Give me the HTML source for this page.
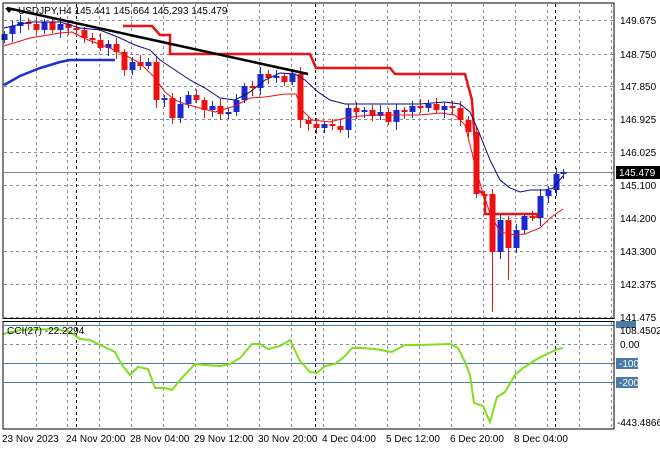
<!DOCTYPE html>
<html><head><style>
body{margin:0;background:#fff;width:660px;height:450px;overflow:hidden;font-family:"Liberation Sans",sans-serif;}
svg{position:absolute;left:0;top:0}
text{font-family:"Liberation Sans",sans-serif;font-size:10px;fill:#000}
</style></head><body>
<svg id="s" width="660" height="450" xmlns="http://www.w3.org/2000/svg">
<g id="grid" stroke="#8a8f96" stroke-dasharray="3,3" stroke-width="1"></g>
<g stroke="#000" stroke-dasharray="3,3" stroke-width="1">
<line x1="76.5" y1="4" x2="76.5" y2="429"/><line x1="315.5" y1="4" x2="315.5" y2="429"/><line x1="555.5" y1="4" x2="555.5" y2="429"/>
</g>
<line x1="4" y1="172.5" x2="614" y2="172.5" stroke="#7d8a96"/>
<g stroke="#4a7ba7" stroke-width="1">
<line x1="4" y1="325.5" x2="614" y2="325.5"/><line x1="4" y1="363.5" x2="614" y2="363.5"/><line x1="4" y1="382.5" x2="614" y2="382.5"/>
</g>
<line x1="4" y1="344.5" x2="614" y2="344.5" stroke="#8a8f96" stroke-dasharray="3,3"/>
<g id="c"></g>
<polyline fill="none" stroke="#1a2fd6" stroke-width="2.5" points="4,85 20,76 40,68 60,62 70,60 115,60"/>
<polyline fill="none" stroke="#ee1111" stroke-width="2.5" points="123,26 152,26 160,35 170,35 170,54 310,54 316,68 390,68 395,74 465,74 472,100 478,190 485,195 485,214 537,214 537,218"/>
<polyline fill="none" stroke="#ee1111" stroke-width="1" points="4,46 30,38 60,33 72,32 88,40 110,48 125,55 140,63 155,78 165,92 175,100 185,104 200,108 215,112 235,106 250,98 265,97 285,94 296,94 302,110 312,120 330,122 345,118 360,116 380,115 400,115 420,115 440,113 455,115 465,125 475,165 482,190 490,213 500,232 515,235 525,234 540,228 550,218 563,209"/>
<polyline fill="none" stroke="#0a0a80" stroke-width="1" points="4,28 30,22 60,22 80,28 100,30 120,38 135,45 150,50 160,60 175,70 190,80 205,88 220,98 235,100 250,92 265,80 280,73 295,74 305,80 318,92 330,100 345,104 370,104 395,104 420,104 445,102 460,104 470,112 478,130 490,160 500,180 510,188 520,192 530,190 545,190 553,188 563,176"/>
<line x1="7" y1="8" x2="308" y2="74" stroke="#000" stroke-width="2.5"/>
<polyline fill="none" stroke="#7ee01a" stroke-width="2" points="3,334 20,330 55,329 70,332 80,339 90,340 100,345 115,352 122,365 130,375 138,367 148,369 155,388 165,388 172,390 180,380 195,364 205,365 220,366 230,364 240,358 252,344 260,344 268,349 280,346 290,340 300,361 310,372 317,373 325,366 335,364 345,356 352,348 362,348 375,349 392,352 405,345 420,345 450,344 458,348 465,362 470,375 474,403 483,406 490,422 497,397 505,392 515,375 523,368 537,359 547,354 558,349 563,348"/>
<rect x="3" y="3" width="611" height="315.5" fill="none" stroke="#000" stroke-width="1"/>
<rect x="3" y="321.5" width="611" height="107.5" fill="none" stroke="#000" stroke-width="1"/>
<text x="18" y="14">USDJPY,H4  145.441 145.664 145.293 145.479</text>
<polygon points="5,8 13,8 9,13" fill="#000"/>
<text x="7" y="334">CCI(27) -22.2294</text>
<g id="ax"></g>
<rect x="616" y="166" width="44" height="13" fill="#000"/>
<text x="619" y="176" style="fill:#fff">145.479</text>
<rect x="616" y="358" width="22" height="11" fill="#4a7ba7"/><text x="619" y="367" style="fill:#fff">-100</text>
<rect x="616" y="377" width="22" height="11" fill="#4a7ba7"/><text x="619" y="386" style="fill:#fff">-200</text>
<rect x="616" y="321" width="20" height="7" fill="#4a7ba7"/>
<text x="620" y="334">108.4502</text>
<text x="620" y="348">0.00</text>
<text x="617" y="426">-443.4866</text>
<g id="tl"></g>
</svg>
<script>
var NS="http://www.w3.org/2000/svg";
function el(p,t,a){var e=document.createElementNS(NS,t);for(var k in a)e.setAttribute(k,a[k]);document.getElementById(p).appendChild(e);return e;}
for(var x=35.5;x<614;x+=31.95){el("grid","line",{x1:Math.round(x)+.5,y1:4,x2:Math.round(x)+.5,y2:429});}
var ys=[20,54,86,119,152,185,218,251,284,317];
ys.forEach(function(y){el("grid","line",{x1:4,y1:y+.5,x2:614,y2:y+.5});});
var lbl=["149.675","148.750","147.850","146.925","146.025","145.100","144.200","143.300","142.375","141.475"];
ys.forEach(function(y,i){if(i==5)return;var t=el("ax","text",{x:620,y:y+4});t.textContent=lbl[i];});
var t5=el("ax","text",{x:620,y:189});t5.textContent="145.100";
var tls=[[2,"23 Nov 2023"],[66,"24 Nov 20:00"],[130,"28 Nov 04:00"],[194,"29 Nov 12:00"],[258,"30 Nov 20:00"],[322,"4 Dec 04:00"],[386,"5 Dec 12:00"],[450,"6 Dec 20:00"],[514,"8 Dec 04:00"]];
tls.forEach(function(a){var t=el("tl","text",{x:a[0],y:442});t.textContent=a[1];});
var P=[[4,34],[12,26],[20,22],[28,24],[36,30],[44,22],[52,30],[60,24],[68,28],[76,30],[84,38],[92,40],[100,48],[108,44],[116,52],[124,70],[132,62],[140,66],[148,62],[156,100],[164,98],[172,118],[180,104],[188,95],[196,100],[204,110],[212,106],[220,114],[228,112],[236,100],[244,86],[252,88],[260,74],[268,78],[276,76],[284,82],[292,74],[300,120],[308,124],[316,128],[324,124],[332,126],[340,130],[348,108],[356,112],[364,110],[372,116],[380,112],[388,122],[396,110],[404,112],[412,106],[420,108],[428,104],[436,110],[444,106],[452,108],[460,120],[468,132],[476,194],[484,194],[492,252],[500,220],[508,248],[516,230],[524,216],[532,218],[540,196],[548,190],[556,174],[563,172]];
var prev=P[0][1]+6;
P.forEach(function(p,i){var o=prev,c=p[1];var up=c<o;var top=Math.min(o,c),bot=Math.max(o,c);if(bot-top<2){bot=top+2;}
var col=up?"#1a2ad0":"#ee1111";var wt=top-3-(i*7%5),wb=bot+3+(i*11%6);
if(p[0]==492){wb=312;} if(p[0]==508){wb=280;}
el("c","line",{x1:p[0]+.5,y1:wt,x2:p[0]+.5,y2:wb,stroke:col});
el("c","rect",{x:p[0]-2.5,y:top,width:6,height:bot-top,fill:col});prev=c;});
</script>
</body></html>
